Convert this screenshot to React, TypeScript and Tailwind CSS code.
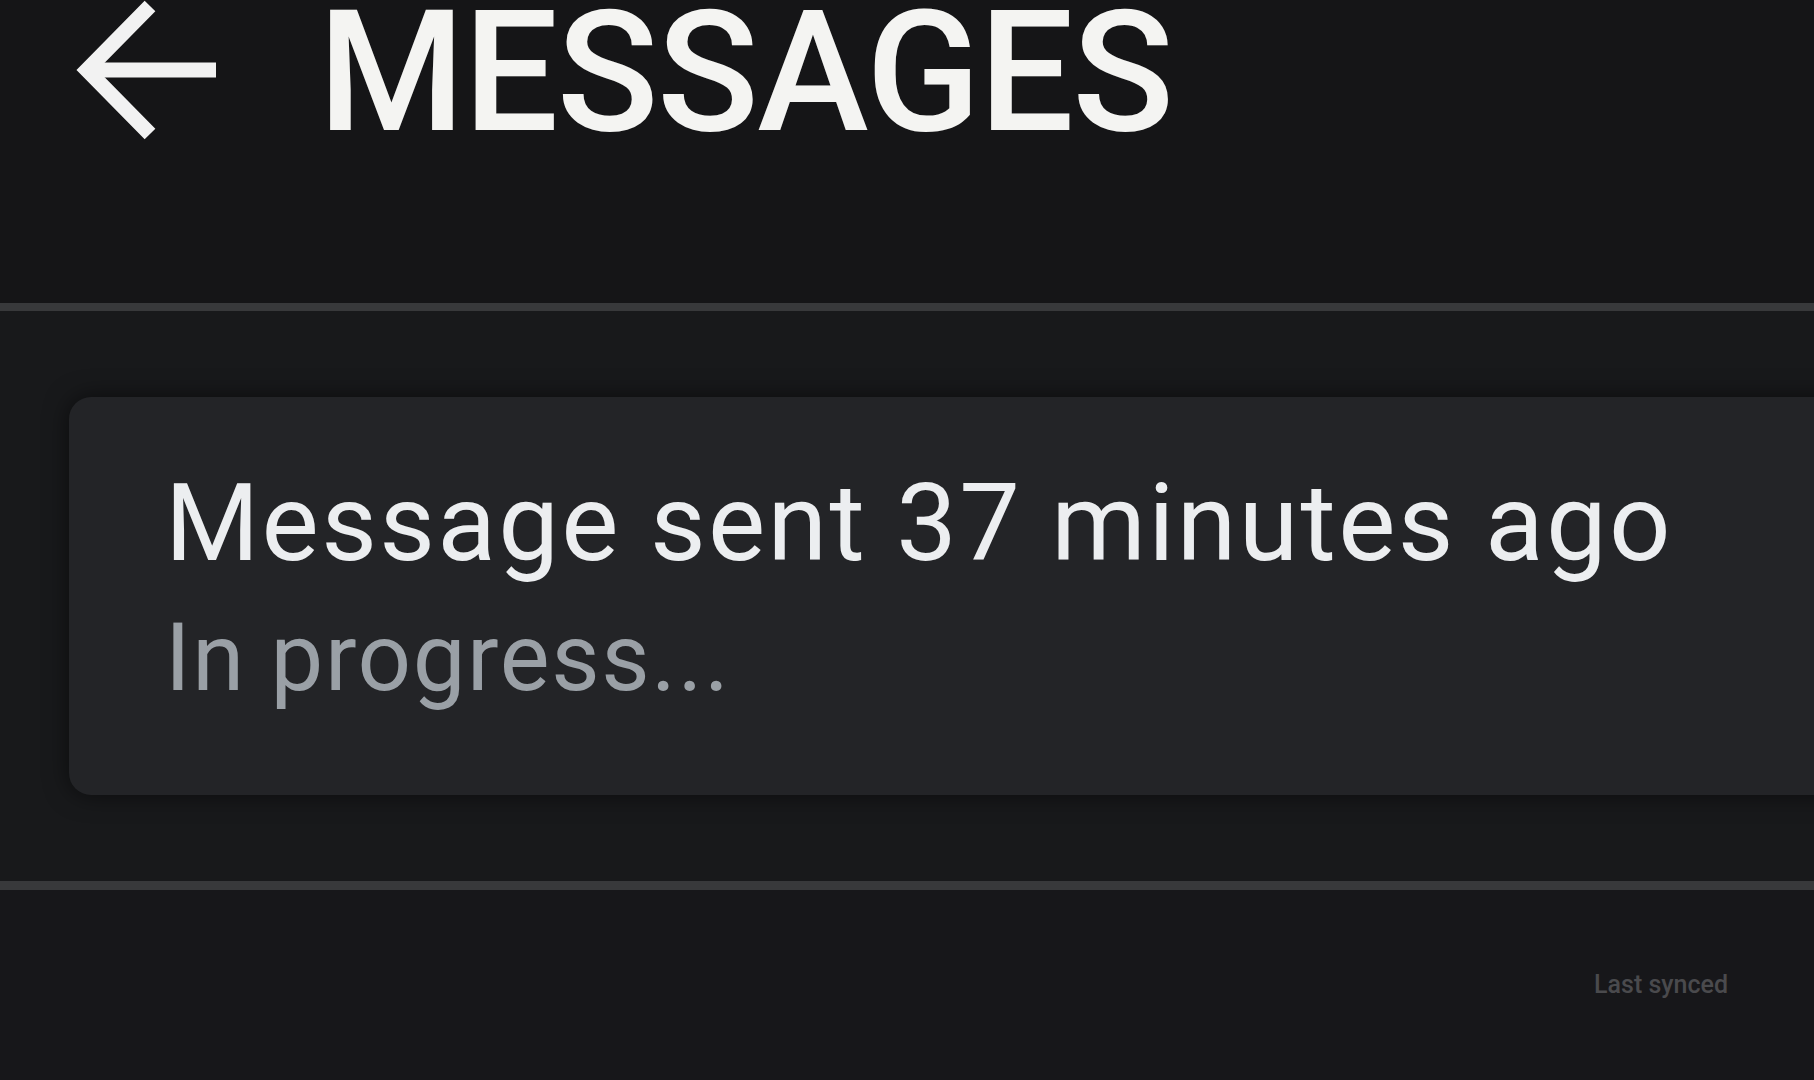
/** Messages status screen: big header with back arrow, one status card, version footer. */
function BackArrow() {
  return (
    <svg
      width="150"
      height="140"
      viewBox="0 0 150 140"
      fill="none"
      stroke="#f2f2f2"
      strokeWidth="15"
      strokeLinecap="butt"
      strokeLinejoin="miter"
      aria-hidden
      className="ml-[72px] shrink-0"
    >
      <path d="M78 6 15 70l63 64" />
      <path d="M15 70h129" />
    </svg>
  );
}

export default function App() {
  return (
    <div
      className="flex h-[1080px] w-full flex-col overflow-hidden bg-[#161618]"
      style={{ fontFamily: "Roboto, 'Noto Sans', sans-serif" }}
    >
      <header className="h-[303px] shrink-0 bg-[#151517]">
        <div className="flex h-[144px] items-start">
          <BackArrow />
          <h1 className="mt-[3px] ml-[96px] text-[168px] leading-[140px] font-medium tracking-[-1.5px] text-[#f4f4f2]">
            MESSAGES
          </h1>
        </div>
      </header>

      <div className="h-[8px] shrink-0 bg-[#38393b]" />

      <section className="flex h-[570px] shrink-0 flex-col bg-[#18191b] pt-[86px] pl-[69px]">
        <div className="-mr-[40px] flex h-[398px] flex-col rounded-[22px] bg-[#232427] pt-[72px] pl-[96px] shadow-[0_0_24px_rgba(0,0,0,0.55)]">
          <p className="text-[108px] leading-none tracking-[2.3px] text-[#eceef0]">
            Message sent 37 minutes ago
          </p>
          <p className="mt-[34px] text-[94px] leading-none tracking-[1.6px] text-[#9aa0a6]">
            In progress...
          </p>
        </div>
      </section>

      <div className="h-[9px] shrink-0 bg-[#38393b]" />

      <footer className="flex flex-1 justify-end bg-[#17171a] pt-[82px] pr-[86px]">
        <span className="text-[25px] leading-none font-medium text-[#4a4a4d]">Last synced</span>
      </footer>
    </div>
  );
}
